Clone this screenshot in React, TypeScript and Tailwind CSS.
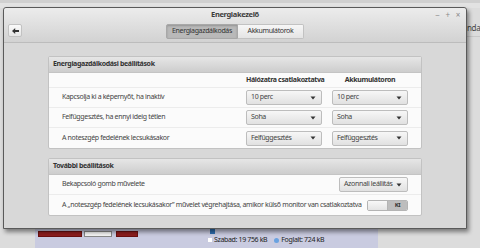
import React from 'react';

const Arrow = () => (
  <svg width="6" height="4" viewBox="0 0 6 4" className="shrink-0">
    <path d="M0.5 0.5 L5.5 0.5 L3 3.5 Z" fill="#333" />
  </svg>
);

const Dropdown = ({ value, className = '' }: { value: string; className?: string }) => (
  <div
    className={`h-[15px] flex items-center justify-between pl-[4px] pr-[5px] rounded-[2px] border border-[#bdbdbd] bg-gradient-to-b from-[#f7f7f7] to-[#e1e1e1] text-[#444] whitespace-nowrap ${className}`}
  >
    <span>{value}</span>
    <Arrow />
  </div>
);

const FrameHeader = ({ title }: { title: string }) => (
  <div className="h-[16px] flex items-center px-[4px] bg-gradient-to-b from-[#e6e6e6] to-[#cdcdcd] border-b border-[#c4c4c4] font-bold text-[#333]">
    {title}
  </div>
);

const Row = ({ label, children, last }: { label: string; children: React.ReactNode; last?: boolean }) => (
  <div className={`flex items-center pl-[13px] pr-[13px] ${last ? '' : 'border-b border-[#ececec]'} h-[20px]`}>
    <span className="flex-1 text-[#444] whitespace-nowrap">{label}</span>
    {children}
  </div>
);

export default function App() {
  return (
    <div className="relative w-[480px] h-[248px] overflow-hidden bg-[#dcdcdc] font-['Noto_Sans',sans-serif] text-[7px] tracking-[-0.35px]">
      {/* desktop behind */}
      <div className="absolute left-0 top-0 w-[480px] h-[8px] bg-[#e2e2e2] border-t-[3px] border-[#d0d0d0]" />
      <div className="absolute left-[467px] top-[22px] text-[#444] text-[8px]">nda</div>
      <div className="absolute left-[467px] top-[36px] w-[13px] h-px bg-[#c8c8c8]" />
      <div className="absolute left-[35px] top-[226px] w-[343px] h-[22px] bg-[#c9cbe0]" />
      <div className="absolute left-[38px] top-[231px] w-[44px] h-[6px] bg-[#8c1d1d] border border-[#6b1010]" />
      <div className="absolute left-[84px] top-[231px] w-[28px] h-[6px] bg-[#f4f4f4] border border-[#888]" />
      <div className="absolute left-[116px] top-[231px] w-[22px] h-[6px] bg-[#8c1d1d] border border-[#6b1010]" />
      <div className="absolute left-[210px] top-[229px] w-[5px] h-[5px] bg-[#2f6eb0]" />
      <div className="absolute left-[208px] top-[235px] flex items-center gap-[2px] text-[7px] text-[#222]">
        <span className="w-[4px] h-[4px] bg-white" />
        <span>Szabad: 19 756 kB</span>
        <span className="ml-[5px] w-[5px] h-[5px] rounded-full bg-[#6aa2e0]" />
        <span>Foglalt: 724 kB</span>
      </div>

      {/* window */}
      <div className="absolute left-[3px] top-[7px] w-[464px] h-[222px] flex flex-col bg-[#d8d8d8] border border-[#5a5a5a] rounded-t-[3px] shadow-[2px_3px_4px_rgba(0,0,0,0.45)]">
        {/* header bar */}
        <div className="h-[35px] flex flex-col bg-gradient-to-b from-[#ececec] to-[#d2d2d2] border-b border-[#bcbcbc] rounded-t-[3px]">
          <div className="relative h-[14px] flex items-center justify-center">
            <span className="font-bold text-[#3c3c3c] text-[7.5px]">Energiakezelő</span>
            <div className="absolute right-[6px] top-[2px] flex gap-[6px] text-[#8a8a8a] text-[8px] leading-[10px]">
              <span>−</span>
              <span>+</span>
              <span>×</span>
            </div>
          </div>
          <div className="relative flex items-center h-[18px]">
            <div className="absolute left-[4px] top-[2px] w-[14px] h-[13px] flex items-center justify-center bg-gradient-to-b from-[#fafafa] to-[#e6e6e6] border border-[#c2c2c2] rounded-[2px]">
              <svg width="7" height="6" viewBox="0 0 7 6">
                <path d="M0 3 L3.2 0 L3.2 2 L7 2 L7 4 L3.2 4 L3.2 6 Z" fill="#333" />
              </svg>
            </div>
            <div className="flex h-[15px] ml-[162px]">
              <div className="w-[72px] flex items-center justify-center bg-[#b9b9b9] border border-[#a8a8a8] rounded-l-[2px] shadow-[inset_0_1px_2px_rgba(0,0,0,0.2)] text-[#333] whitespace-nowrap">
                Energiagazdálkodás
              </div>
              <div className="w-[66px] flex items-center justify-center bg-gradient-to-b from-[#f7f7f7] to-[#e4e4e4] border border-l-0 border-[#c2c2c2] rounded-r-[2px] text-[#333] whitespace-nowrap">
                Akkumulátorok
              </div>
            </div>
          </div>
        </div>

        {/* content */}
        <div className="flex-1 flex flex-col gap-[9px] pt-[13px] px-[44px]">
          <div className="border border-[#c2c2c2] bg-[#fbfbfb] rounded-[2px]">
            <FrameHeader title="Energiagazdálkodási beállítások" />
            <div className="h-[14px] flex items-center pr-[13px] font-bold text-[#333] whitespace-nowrap">
              <span className="flex-1" />
              <span className="w-[76px] text-center">Hálózatra csatlakoztatva</span>
              <span className="w-[76px] ml-[10px] text-center">Akkumulátoron</span>
            </div>
            <div className="border-t border-[#ececec]">
              <Row label="Kapcsolja ki a képernyőt, ha inaktív">
                <Dropdown value="10 perc" className="w-[76px]" />
                <Dropdown value="10 perc" className="w-[76px] ml-[10px]" />
              </Row>
              <Row label="Felfüggesztés, ha ennyi ideig tétlen">
                <Dropdown value="Soha" className="w-[76px]" />
                <Dropdown value="Soha" className="w-[76px] ml-[10px]" />
              </Row>
              <Row label="A noteszgép fedelének lecsukásakor" last>
                <Dropdown value="Felfüggesztés" className="w-[76px]" />
                <Dropdown value="Felfüggesztés" className="w-[76px] ml-[10px]" />
              </Row>
            </div>
          </div>

          <div className="border border-[#c2c2c2] bg-[#fbfbfb] rounded-[2px]">
            <FrameHeader title="További beállítások" />
            <Row label="Bekapcsoló gomb művelete">
              <Dropdown value="Azonnali leállítás" className="w-[69px]" />
            </Row>
            <Row label="A „noteszgép fedelének lecsukásakor” művelet végrehajtása, amikor külső monitor van csatlakoztatva" last>
              <div className="w-[41px] h-[11px] flex border border-[#b4b4b4] rounded-[2px] overflow-hidden">
                <div className="flex-1 bg-gradient-to-b from-[#f8f8f8] to-[#e4e4e4] border-r border-[#b4b4b4]" />
                <div className="flex-1 flex items-center justify-center bg-[#bdbdbd] font-bold text-[#333] text-[6px]">KI</div>
              </div>
            </Row>
          </div>
        </div>
      </div>
    </div>
  );
}
